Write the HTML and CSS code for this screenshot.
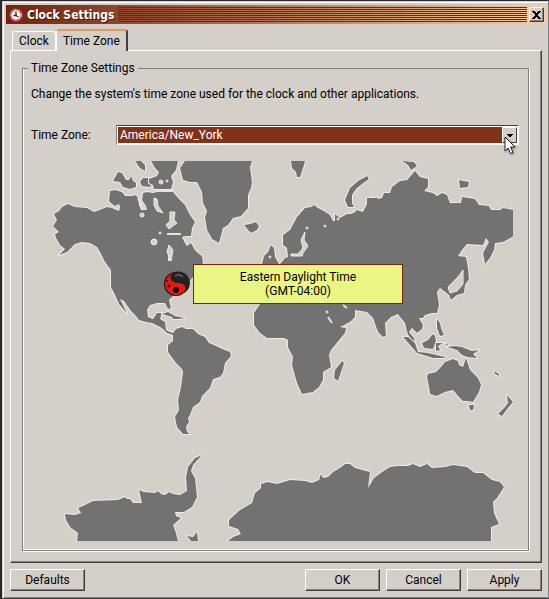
FILE: index.html
```html
<!DOCTYPE html>
<html lang="en">
<head>
<meta charset="utf-8">
<title>Clock Settings</title>
<link rel="stylesheet" href="styles.css">
</head>
<body>
<main class="window">
  <header class="titlebar">
    <svg class="title-icon" viewBox="0 0 14 14" aria-hidden="true">
      <circle cx="7" cy="7" r="6.6" fill="#c5414f"/>
      <circle cx="7" cy="7" r="5.6" fill="none" stroke="#f0a0a0" stroke-width="1" stroke-dasharray="2 2"/>
      <circle cx="7" cy="7" r="4.7" fill="#fff"/>
      <path d="M7 3.5V7.5L9.5 9M7 7.5H4.5" fill="none" stroke="#222" stroke-width="1.3"/>
    </svg>
    <h1 class="title">Clock Settings</h1>
    <span class="stripes"></span>
    <button class="close" type="button" aria-label="Close">
      <svg viewBox="0 0 9 8" aria-hidden="true"><path d="M0 0h3v1h1v1h1V1h1V0h3v1H8v1H7v1H6v2h1v1h1v1h1v1H6V7H5V6H4v1H3v1H0V7h1V6h1V5h1V3H2V2H1V1H0z"/></svg>
    </button>
  </header>

  <div class="content">
    <nav class="tabs">
      <button class="tab" type="button">Clock</button>
      <button class="tab tab-active" type="button">Time Zone</button>
    </nav>

    <section class="panel">
      <fieldset class="group">
        <legend>Time Zone Settings</legend>
        <p class="hint">Change the system's time zone used for the clock and other applications.</p>
        <div class="row">
          <label for="zone">Time Zone:</label>
          <div class="combo">
            <select id="zone"><option>America/New_York</option></select>
            <span class="combo-arrow"><svg viewBox="0 0 6 3" aria-hidden="true"><path d="M0 0h6v1H5v1H4v1H2V2H1V1H0z"/></svg></span>
            <svg class="cursor" viewBox="0 0 12 19" aria-hidden="true">
              <path d="M1 1V15L4 12L6.5 17.5L9 16.500L6.500 11H11Z" fill="#fff" stroke="#222" stroke-width="1"/>
            </svg>
          </div>
        </div>

        <div class="map">
          <svg class="world" viewBox="53 161 460 380" role="img" aria-label="World map">
            <g class="land">
              <path d="M68 204L75 207L87 208L94 212L102 209L107 207L112 208L119 211L120 207L119 204L115 206L112 204L109 201L110 191L115 190L122 192L125 196L132 196L136 195L138 198L139 205L141 210L147 210L146 206L142 200L143 193L147 192L153 193L157 192L173 192L178 198L185 205L190 215L195 222L192 228L191 236L186 236L182 237L185 243L187 246L191 243L195 250L198 253L202 256L203 262L200 272L192 278L186 286L180 293L173 296L169 300L171 308L168 309L165 303L157 303L150 305L147 310L148 317L153 319L157 313L162 313L160 319L165 322L166 330L170 332L173 333L176 329L182 327L186 329L193 329L198 334L205 337L209 343L214 345L220 348L230 352L231 356L225 363L223 373L220 377L213 379L210 388L202 396L200 402L193 407L190 415L188 418L189 422L186 427L187 432L190 434L183 434L177 427L175 417L179 410L178 400L181 387L183 372L182 369L176 363L168 352L168 345L173 341L173 335L170 334L167 333L163 329L160 327L152 323L146 322L139 320L136 316L131 311L124 301L120 299L127 313L124 310L119 304L115 295L111 287L111 270L105 262L100 252L97 247L90 243L82 242L75 244L67 252L59 255L65 249L60 245L56 238L55 234L59 232L53 226L57 220L54 214L59 211L62 207Z"/>
              <path d="M113 181L118 172L122 173L126 180L129 180L131 176L133 181L136 183L136 187L130 189L123 187L120 182Z"/>
              <path d="M136 161H141L145 165V171L140 168L137 164Z"/>
              <path d="M140 182L143 178L150 178L153 183L150 187L142 186Z"/>
              <path d="M151 161L155 168L159 172L157 176L149 179L149 183L153 185L154 189L171 189L173 182L171 176L176 170L178 161Z"/>
              <path d="M185 161L180 168L183 180L190 182L197 182L202 192L203 203L207 211L205 217L207 230L212 239L219 243L223 228L228 225L233 218L241 216L248 208L248 195L251 188L252 182L250 167L252 161Z"/>
              <path d="M244 225L250 224L256 222L259 226L257 230L251 233L248 230Z"/>
              <path d="M291 161H305L304 165L300 177H297L296 172L292 168Z"/>
              <path d="M367 176L369 179L362 184L356 189L352 195L352 203L354 207L348 207L345 200L350 188L358 181Z"/>
              <path d="M262 264L264 256L268 252L271 245L274 248L275 257L279 264Z"/>
              <path d="M280 264L285 258L288 257L287 248L283 245L283 235L290 230L297 217L305 208L311 207L314 205L318 208L322 210L330 215L333 221L335 221L335 214L340 218L347 214L351 214L355 212L357 210L363 212L367 204L367 198L375 198L376 197L378 199L382 198L384 193L390 193L392 187L400 181L407 180L415 171L420 177L428 179L428 187L424 191L433 193L437 196L442 193L447 195L450 203L461 203L462 197L475 199L479 205L489 206L491 210L500 210L503 208L514 210L514 236L503 242L495 243L494 250L490 258L485 264L483 253L489 242L486 238L483 245L467 244L462 250L458 256L466 257L468 268L469 279L465 285L464 293L457 295L451 300L449 295L440 288L437 292L439 305L437 313L432 313L425 315L423 318L419 318L423 325L422 329L417 333L412 328L409 332L414 338L416 348L413 344L407 332L405 323L400 317L398 314L391 317L385 323L386 336L383 337L378 332L373 318L367 312L355 310L355 317L350 322L340 327L346 328L345 333L331 350L329 355L331 367L323 372L323 380L319 387L313 392L302 394L297 383L292 365L293 357L288 347L288 340L284 338L267 338L260 333L254 325L254 313L260 304Z"/>
              <path d="M342 361L344 363L338 381L334 378L335 370Z"/>
              <path d="M402 161L414 162L417 166L411 170L408 165Z"/>
              <path d="M459 180L469 182L468 187L460 188Z"/>
              <path d="M403 337L408 337L415 343L418 352L428 353L445 357L445 358L433 358L417 353L410 345Z"/>
              <path d="M422 343L428 340L433 334L435 336L436 341L433 349L424 348Z"/>
              <path d="M436 343L443 343L438 346L440 350L436 351Z"/>
              <path d="M437 319L440 323L441 328L444 335L440 336L437 328Z"/>
              <path d="M446 343L448 345L446 346Z"/>
              <path d="M447 347L455 346L462 347L472 351L479 350L473 354L477 358L467 357L462 355L457 350Z"/>
              <path d="M427 377L428 374L436 372L440 368L445 362L453 359L458 361L459 365L463 367L466 358L470 370L478 378L481 385L479 392L473 402L467 401L463 401L458 396L453 390L445 392L437 396L430 394L429 387Z"/>
              <path d="M469 405H474L473 410H470Z"/>
              <path d="M507 395L513 402L508 408L502 416L498 414L505 407L508 403Z"/>
              <path d="M494 371L499 374V376L495 374Z"/>
              <path d="M162 314L168 312L175 316L185 318L178 319L173 319L172 317Z"/>
              <path d="M65 514L75 515L81 513L78 508L85 505L93 501L118 500L125 497L127 499L130 499L133 503L142 503L139 490L144 492L155 493L158 491L161 494L165 495L169 492L173 494L180 495L187 491L186 477L188 467L195 458L202 455L193 465L191 471L195 478L197 497L192 507L184 512L175 512L176 516L181 518L173 525L176 533L178 541H77L78 533L70 527L66 520Z"/>
              <path d="M187 536L193 537L197 532L198 541H191Z"/>
              <path d="M228 541L233 537L241 534L238 529L229 526L229 520L240 510L252 503L255 493L261 488L261 484L268 482L277 484L290 480L305 481L312 483L319 480L321 474L323 478L328 477L333 472L340 468L345 464L350 464L355 468L370 472L368 488L374 478L382 472L390 467L397 466L408 466L413 464L420 467L427 464L432 468L445 467L453 465L467 467L475 473L483 473L492 480L500 482L504 487L497 498L493 502L494 513L499 524L491 527V541Z"/>
            </g>
            <g class="water">
              <path d="M154 198L157 199L158 206L163 213L157 211L154 205Z"/>
              <path d="M170 212H175L174 220L177 223L173 226L169 229L166 225L170 221Z"/>
              <path d="M169 245L173 250L171 261L167 252Z"/>
              <path d="M305 232L301 240L303 248L298 254L291 254L291 256H302L303 253L308 246L304 240Z"/>
              <path d="M463 270V284L457 291L450 293L448 287L458 277Z"/>
              <circle cx="142" cy="215" r="2"/><circle cx="154" cy="242" r="3"/><circle cx="160" cy="233" r="1"/>
              <circle cx="161" cy="182" r="2"/><circle cx="167" cy="181" r="1"/>
              <circle cx="307" cy="228" r="1"/><circle cx="325" cy="226" r="1"/><circle cx="327" cy="312" r="1"/>
              <circle cx="338" cy="219" r="1"/><circle cx="270" cy="257" r="1"/>
            </g>
            <path class="strait" d="M167 234H181M157 191H174M169 254V261M138 198L143 208M328 317L332 323M343 305L347 308"/>
            <g class="marker">
              <circle cx="176" cy="284" r="12" fill="#111"/>
              <circle cx="176" cy="284" r="11" fill="#e01c10"/>
              <path d="M173 273A11 11 0 0 1 184 293C188 287 184 283 178 283C171 283 168 277 173 273Z" fill="#222"/>
              <path d="M175 276Q179 273 183 277" fill="none" stroke="#555" stroke-width="2"/>
              <circle cx="176" cy="290" r="3" fill="#250500"/><circle cx="169" cy="286" r="1.500" fill="#400800"/><circle cx="167" cy="281" r="1" fill="#400800"/>
            </g>
          </svg>
          <div class="tooltip">Eastern Daylight Time<br>(GMT-04:00)</div>
        </div>
      </fieldset>
    </section>

    <footer class="actions">
      <button class="btn btn-left" type="button">Defaults</button>
      <button class="btn" type="button">OK</button>
      <button class="btn" type="button">Cancel</button>
      <button class="btn" type="button">Apply</button>
    </footer>
  </div>
</main>
</body>
</html>
```
FILE: styles.css
```css
* { box-sizing: border-box; }

:root {
  --face: #d4cfc8;
  --light: #fff;
  --shade: #808080;
  --dark: #404040;
  --rust: #83321a;
}

body {
  margin: 0;
  background: #2b272b;
  color: #000;
  font: 12px/14px Roboto, "Liberation Sans", sans-serif;
}

button, select { font: inherit; color: inherit; }

.window {
  min-height: 100vh;
  margin-left: 2px;
  padding: 3px 1px 6px 3px;
  background: var(--face);
  border-top: 1px solid #2b272b;
  border-right: 1px solid var(--shade);
  border-bottom: 1px solid var(--dark);
  box-shadow: inset 1px 1px var(--face), inset 2px 2px var(--light), inset 0 -1px var(--shade);
}

.titlebar {
  display: flex;
  align-items: center;
  height: 19px;
  margin: 1px 1px 0 1px;
  padding: 0 2px 0 3px;
  background: linear-gradient(90deg, #72230c, #f8cda0);
}
.title-icon { width: 14px; height: 14px; margin-right: 4px; }
.title {
  margin: 0 4px 0 0;
  color: #fff;
  font: bold 12px/18px "DejaVu Sans Condensed", "DejaVu Sans", sans-serif;
  text-shadow: 1px 1px #4a1405;
}
.stripes {
  flex: 1;
  height: 15px;
  background: repeating-linear-gradient(#74230c 0 1px, transparent 1px 2px);
}
.close {
  display: grid;
  place-items: center;
  width: 15px;
  height: 15px;
  margin-left: 2px;
  padding: 0;
  background: var(--face);
  border: 1px solid;
  border-color: var(--light) var(--dark) var(--dark) var(--light);
  box-shadow: inset -1px -1px var(--shade);
}
.close svg { width: 9px; height: 8px; }

.content { padding: 5px 5px 0; }

.tabs { display: flex; align-items: flex-end; padding-left: 2px; }
.tab {
  height: 19px;
  margin-top: 2px;
  padding: 0 6px;
  background: var(--face);
  border: 1px solid var(--light);
  border-bottom: 0;
  border-radius: 3px 3px 0 0;
}
.tab-active {
  position: relative;
  height: 22px;
  margin: 0 0 -1px;
  padding: 0 6px;
  border-top: 2px solid #e8945a;
  border-right: 2px solid var(--dark);
}

.panel {
  padding: 10px 12px 11px 11px;
  border: 1px solid;
  border-color: var(--light) var(--dark) var(--dark) var(--light);
  box-shadow: inset -1px -1px var(--shade);
}

.group {
  min-width: 0;
  margin: 0;
  padding: 12px 9px 9px 8px;
  border: 1px solid var(--shade);
  box-shadow: inset 1px 0 var(--light), inset 0 -1px var(--light), 1px 1px var(--light);
}
.group legend { padding: 0 3px; margin-left: -3px; }

.hint { margin: 0 0 24px; }

.row { display: flex; align-items: center; }
.row label { flex: 0 0 85px; }
.combo {
  position: relative;
  display: flex;
  flex: 1;
  height: 20px;
  padding: 1px;
  background: var(--light);
  border: 1px solid;
  border-color: var(--dark) var(--light) var(--light) var(--shade);
}
.combo select {
  flex: 1;
  min-width: 0;
  padding: 0 2px;
  appearance: none;
  color: #fff;
  background: var(--rust);
  border: 0;
  border-radius: 0;
}
.combo-arrow {
  display: grid;
  place-items: center;
  width: 15px;
  background: var(--face);
  border: 1px solid;
  border-color: var(--light) var(--dark) var(--dark) var(--light);
}
.combo-arrow svg { width: 6px; height: 3px; }
.cursor { position: absolute; right: 2px; top: 10px; width: 12px; height: 19px; filter: drop-shadow(1px 1px 1px #888); }

.map { position: relative; margin: 16px 6px 0 22px; }
.world { display: block; width: 100%; }
.land { fill: #727272; stroke: #efede8; stroke-width: 2; stroke-linejoin: round; paint-order: stroke; }
.water { fill: var(--face); stroke: #efede8; stroke-width: 1; stroke-linejoin: round; }
.strait { fill: none; stroke: #e6e2dc; stroke-width: 2; }
.tooltip {
  position: absolute;
  left: 140px;
  top: 103px;
  width: 210px;
  padding: 5px 0;
  text-align: center;
  background: #eaf584;
  border: 1px solid #74230c;
}

.actions { display: flex; gap: 6px; padding-top: 6px; }
.btn {
  width: 75px;
  height: 22px;
  padding: 0;
  background: var(--face);
  border: 1px solid;
  border-color: var(--light) var(--dark) var(--dark) var(--light);
  box-shadow: inset -1px -1px var(--shade);
}
.btn-left { margin-right: auto; }
```
